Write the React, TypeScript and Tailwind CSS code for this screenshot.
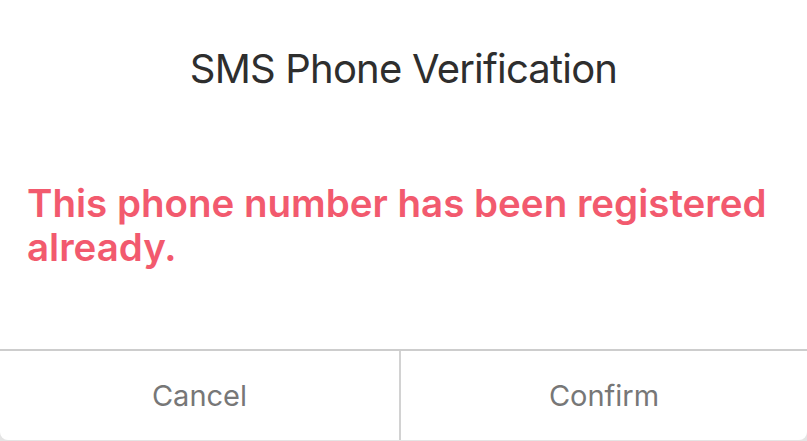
import React from 'react';

const App: React.FC = () => {
  return (
    <div className="w-[807px] h-[441px] bg-[#e4e4e4] overflow-hidden" style={{ fontFamily: 'Inter, "Liberation Sans", sans-serif' }}>
      <div className="h-[440px] bg-white rounded-b-[8px] flex flex-col">
        {/* Body */}
        <div className="h-[349px] px-[27px] pt-[45px]">
          <h1 className="text-[40px] leading-[48px] tracking-[-0.8px] text-[#2e2e2e] text-center">SMS Phone Verification</h1>
          <p className="mt-[88px] text-[38.5px] leading-[44px] font-semibold text-[#f25a6e]">
            This phone number has been registered already.
          </p>
        </div>

        <div className="h-[2px] bg-[#cdcdcd]" />

        {/* Actions */}
        <div className="flex-1 flex">
          <button className="w-[401px] flex items-center justify-center border-r-2 border-[#d2d2d2] text-[29px] text-[#777777]">
            Cancel
          </button>
          <button className="flex-1 flex items-center justify-center text-[29px] text-[#777777]">
            Confirm
          </button>
        </div>
      </div>
    </div>
  );
};

export default App;
